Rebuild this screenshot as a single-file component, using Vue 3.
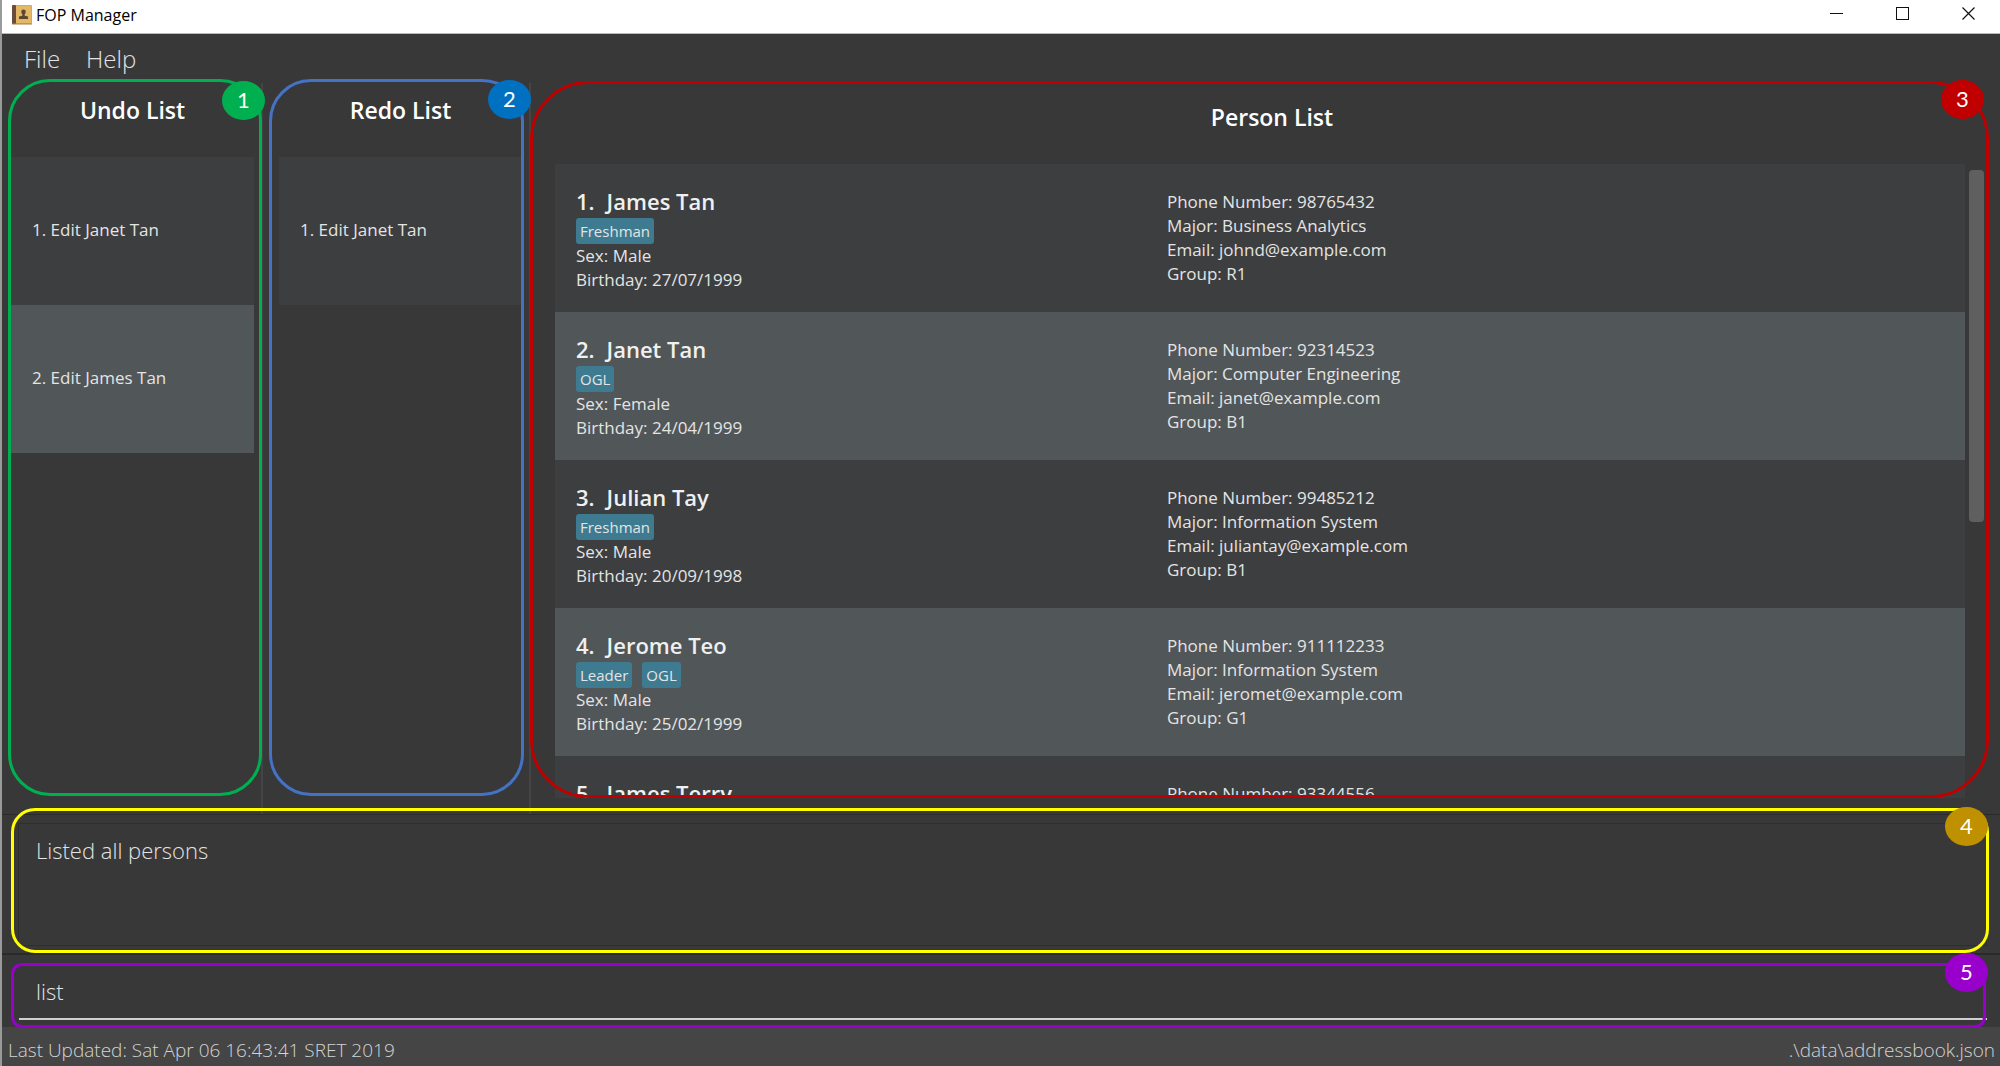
<script setup>
import { ref } from 'vue'

const undoCommands = ['Edit Janet Tan', 'Edit James Tan']
const redoCommands = ['Edit Janet Tan']

const persons = [
  { name: 'James Tan', tags: ['Freshman'], sex: 'Male', birthday: '27/07/1999', phone: '98765432', major: 'Business Analytics', email: 'johnd@example.com', group: 'R1' },
  { name: 'Janet Tan', tags: ['OGL'], sex: 'Female', birthday: '24/04/1999', phone: '92314523', major: 'Computer Engineering', email: 'janet@example.com', group: 'B1' },
  { name: 'Julian Tay', tags: ['Freshman'], sex: 'Male', birthday: '20/09/1998', phone: '99485212', major: 'Information System', email: 'juliantay@example.com', group: 'B1' },
  { name: 'Jerome Teo', tags: ['Leader', 'OGL'], sex: 'Male', birthday: '25/02/1999', phone: '911112233', major: 'Information System', email: 'jeromet@example.com', group: 'G1' },
  { name: 'James Terry', tags: [], sex: '', birthday: '', phone: '93344556', major: '', email: '', group: '' }
]

const result = ref('Listed all persons')
const command = ref('list')
</script>

<template>
  <div class="window">
    <header class="title-bar">
      <svg class="app-icon" width="20" height="20" viewBox="0 0 20 20" aria-hidden="true">
        <rect x="0" y="0" width="20" height="19" rx="1" fill="#d9a95a" />
        <rect x="4" y="1" width="15" height="17" fill="#e3b766" />
        <rect x="0" y="0" width="4" height="19" rx="1" fill="#6b4c3a" />
        <path d="M11.500 4.500c1.300 0 2.200.9 2.200 2.200 0 1.200-.6 1.800-1 2.300v1.800l3.300.8v2.400H7v-2.400l3.300-.8V9c-.4-.5-1-1.100-1-2.300 0-1.300.9-2.200 2.200-2.200z" fill="#5b4630" />
        <path d="M0 19h20" stroke="#a87c3c" />
      </svg>
      <span class="app-name">FOP Manager</span>
      <div class="window-buttons">
        <button type="button" aria-label="Minimize">
          <svg width="14" height="14" viewBox="0 0 14 14"><path d="M0 7.500h13" stroke="#111" fill="none" /></svg>
        </button>
        <button type="button" aria-label="Maximize">
          <svg width="14" height="14" viewBox="0 0 14 14"><rect x=".5" y="1.500" width="12" height="12" stroke="#111" fill="none" /></svg>
        </button>
        <button type="button" aria-label="Close">
          <svg width="14" height="14" viewBox="0 0 14 14"><path d="M.5 1.500l12 12M12.500 1.500l-12 12" stroke="#111" stroke-width="1.200" fill="none" /></svg>
        </button>
      </div>
    </header>

    <nav class="menu-bar">
      <button type="button">File</button>
      <button type="button">Help</button>
    </nav>

    <main class="split">
      <section class="pane history undo">
        <h2>Undo List</h2>
        <ol class="cells">
          <li v-for="(c, i) in undoCommands" :key="i">{{ i + 1 }}. {{ c }}</li>
        </ol>
        <div class="outline green"></div>
        <span class="badge green-badge">1</span>
      </section>

      <section class="pane history redo">
        <h2>Redo List</h2>
        <ol class="cells">
          <li v-for="(c, i) in redoCommands" :key="i">{{ i + 1 }}. {{ c }}</li>
        </ol>
        <div class="outline blue"></div>
        <span class="badge blue-badge">2</span>
      </section>

      <section class="pane people">
        <h2>Person List</h2>
        <div class="scroll-area">
          <ol class="cells">
            <li v-for="(p, i) in persons" :key="i" class="person">
              <div class="identity">
                <h3><span>{{ i + 1 }}.</span><span>{{ p.name }}</span></h3>
                <template v-if="p.tags.length">
                  <div class="tags"><span v-for="t in p.tags" :key="t" class="tag">{{ t }}</span></div>
                  <p>Sex: {{ p.sex }}</p>
                  <p>Birthday: {{ p.birthday }}</p>
                </template>
              </div>
              <div class="details">
                <p>Phone Number: {{ p.phone }}</p>
                <template v-if="p.email">
                  <p>Major: {{ p.major }}</p>
                  <p>Email: {{ p.email }}</p>
                  <p>Group: {{ p.group }}</p>
                </template>
              </div>
            </li>
          </ol>
          <div class="track"><div class="thumb"></div></div>
        </div>
        <div class="outline red"></div>
        <span class="badge red-badge">3</span>
      </section>
    </main>

    <section class="result">
      <textarea v-model="result" readonly aria-label="Result"></textarea>
      <div class="outline yellow"></div>
      <span class="badge yellow-badge">4</span>
    </section>

    <section class="command">
      <input v-model="command" type="text" aria-label="Command" />
      <div class="outline purple"></div>
      <span class="badge purple-badge">5</span>
    </section>

    <footer class="status-bar">
      <span>Last Updated: Sat Apr 06 16:43:41 SRET 2019</span>
      <span>.\data\addressbook.json</span>
    </footer>
  </div>
</template>

<style>
body {
  margin: 0;
  background: #383838;
}
</style>

<style scoped>
.window {
  box-sizing: border-box;
  display: flex;
  flex-direction: column;
  height: 100vh;
  border-left: 2px solid #9a9a9a;
  background: #383838;
  color: #e4e4e4;
  font-family: "Open Sans", "Noto Sans", sans-serif;
  font-size: 17px;
  line-height: 24px;
  overflow: hidden;
}

.window * {
  box-sizing: border-box;
}

button,
input,
textarea {
  font-family: inherit;
  color: inherit;
  background: none;
  border: 0;
  outline: 0;
  padding: 0;
}

h2,
h3,
p,
ol {
  margin: 0;
  padding: 0;
  list-style: none;
}

.title-bar {
  display: flex;
  align-items: center;
  flex: none;
  height: 34px;
  padding: 0 24px 4px 10px;
  background: #fff;
  border-bottom: 1px solid #b4bdb4;
  color: #000;
}

.app-icon {
  flex: none;
}

.app-name {
  margin-left: 4px;
  font-size: 16px;
}

.window-buttons {
  display: flex;
  gap: 52px;
  margin-left: auto;
}

.window-buttons button {
  display: flex;
  width: 14px;
  height: 18px;
}

.menu-bar {
  display: flex;
  flex: none;
  gap: 26px;
  height: 49px;
  padding: 7px 22px;
}

.menu-bar button {
  font-size: 24px;
  font-weight: 300;
  line-height: 34px;
}

.split {
  display: flex;
  flex: 1;
  min-height: 0;
}

.pane {
  position: relative;
  display: flex;
  flex-direction: column;
  min-height: 0;
}

h2 {
  color: #fff;
  font-size: 23px;
  font-weight: 600;
  line-height: 32px;
  text-align: center;
}

.history {
  flex: none;
  border-right: 2px solid #444;
}

.history h2 {
  margin: 0 7px 31px 0;
  padding-top: 11px;
}

.undo {
  width: 261px;
  padding-left: 9px;
}

.undo .cells {
  margin-right: 7px;
}

.redo {
  width: 268px;
  padding-left: 16px;
}

.redo .cells {
  margin-right: 8px;
}

.cells li {
  height: 148px;
  background: #3c3e3f;
}

.cells li:nth-child(even) {
  background: #515658;
}

.history li {
  display: flex;
  align-items: center;
  padding: 0 0 2px 21px;
}

.people {
  flex: 1;
  min-width: 0;
  padding: 18px 11px 16px 24px;
}

.people h2 {
  margin-bottom: 31px;
}

.scroll-area {
  display: flex;
  flex: 1;
  min-height: 0;
  overflow: hidden;
}

.people .cells {
  flex: 1;
}

.person {
  display: grid;
  grid-template-columns: 432fr 568fr;
  padding: 24px 21px 0;
}

.details {
  padding-top: 2px;
}

h3 {
  display: flex;
  gap: 12px;
  color: #f0f0f0;
  font-size: 22px;
  font-weight: 600;
  line-height: 26px;
}

.tags {
  display: flex;
  gap: 10px;
  padding-top: 4px;
}

.tag {
  padding: 0 4px;
  border-radius: 3px;
  background: #3e7b91;
  font-size: 15px;
  line-height: 26px;
}

.track {
  flex: none;
  width: 24px;
  padding: 6px 5px 0 4px;
}

.thumb {
  height: 352px;
  border-radius: 4px;
  background: #5f5f5f;
}

.result {
  position: relative;
  display: flex;
  flex: none;
  height: 139px;
  padding: 8px 13px 7px 16px;
  border-top: 1px solid #2a2a2a;
}

textarea {
  flex: 1;
  resize: none;
  padding: 9px 17px;
  border: 1px solid #2e2e2e;
  font-size: 22px;
  font-weight: 300;
  line-height: 34px;
}

.command {
  position: relative;
  display: flex;
  flex: none;
  height: 74px;
  padding: 9px 13px 7px 17px;
  border-top: 2px solid #2a2a2a;
}

input {
  flex: 1;
  padding: 0 17px;
  border-bottom: 2px solid #cfcfcf;
  font-size: 22px;
  font-weight: 300;
}

.status-bar {
  display: flex;
  flex: none;
  justify-content: space-between;
  height: 39px;
  padding: 7px 5px 0 6px;
  background: #454545;
  color: #d4d4d4;
  font-size: 19px;
  font-weight: 300;
  line-height: 32px;
}

/* Numbered call-outs lying over the panes */
.outline {
  position: absolute;
  border: 3px solid;
  pointer-events: none;
}

.green {
  inset: -4px -1px 18px 6px;
  border-color: #00b050;
  border-radius: 42px;
}

.blue {
  inset: -4px 5px 18px 6px;
  border-color: #4472c4;
  border-radius: 42px;
}

.red {
  inset: -2px 11px 16px -1px;
  border-color: #c00000;
  border-radius: 58px;
}

.yellow {
  inset: -7px 11px 0 9px;
  border-color: #ffff00;
  border-radius: 24px;
}

.purple {
  inset: 8px 14px -1px 9px;
  border-color: #9900cc;
  border-radius: 11px;
}

.badge {
  position: absolute;
  z-index: 1;
  width: 43px;
  height: 39px;
  border-radius: 50%;
  color: #fff;
  font-family: Lato, sans-serif;
  font-size: 22px;
  line-height: 37px;
  text-align: center;
}

.green-badge {
  top: -2px;
  right: -4px;
  background: #00b050;
}

.blue-badge {
  top: -3px;
  right: -2px;
  background: #0070c0;
}

.red-badge {
  top: -3px;
  right: 16px;
  background: #c00000;
}

.yellow-badge {
  top: -8px;
  right: 12px;
  background: #bf9000;
}

.purple-badge {
  top: -2px;
  right: 12px;
  background: #9900cc;
}
</style>
